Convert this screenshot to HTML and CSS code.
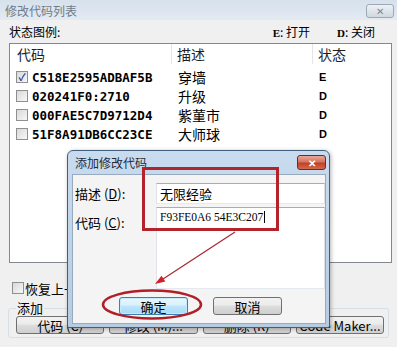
FILE: index.html
```html
<html>
  <head>
    <link rel="stylesheet" href="styles.css">
  </head>
  <body>
    <div class="window">
      <div class="titlebar">
        <span class="title">修改代码列表</span>
        <span class="close-btn">✕</span>
      </div>
      <div class="client">
        <div class="legend">
          <span>状态图例:</span>
          <span class="legend-keys"><span><b class="key">E</b>: 打开</span><span><b class="key">D</b>: 关闭</span></span>
        </div>

        <div class="list">
          <div class="list-head">
            <div class="head-cell first">代码</div>
            <div class="head-cell second">描述</div>
            <div class="head-cell third">状态</div>
          </div>
          <div class="rows">
            <div class="row">
              <div class="cell-code"><span class="check checked">✓</span><span class="code">C518E2595ADBAF5B</span></div>
              <div class="desc">穿墙</div>
              <div class="state">E</div>
            </div>
            <div class="row">
              <div class="cell-code"><span class="check"></span><span class="code">020241F0:2710</span></div>
              <div class="desc">升级</div>
              <div class="state">D</div>
            </div>
            <div class="row">
              <div class="cell-code"><span class="check"></span><span class="code">000FAE5C7D9712D4</span></div>
              <div class="desc">紫菫市</div>
              <div class="state">D</div>
            </div>
            <div class="row">
              <div class="cell-code"><span class="check"></span><span class="code">51F8A91DB6CC23CE</span></div>
              <div class="desc">大师球</div>
              <div class="state">D</div>
            </div>
          </div>
        </div>

        <div class="restore"><span class="check"></span>恢复上一次的设置</div>

        <fieldset class="group">
          <legend>添加</legend>
          <div class="group-buttons">
            <div class="btn">代码 (C)</div>
            <div class="btn">修改 (M)...</div>
            <div class="btn">删除 (R)</div>
            <div class="btn">Code Maker...</div>
          </div>
        </fieldset>
      </div>
    </div>

    <div class="dialog">
      <div class="dialog-title">
        <span>添加修改代码</span>
        <span class="dialog-close">✕</span>
      </div>
      <div class="dialog-body">
        <div class="field-label">描述 (<u>D</u>):</div>
        <div class="input">无限经验</div>
        <div class="field-label top">代码 (<u>C</u>):</div>
        <div class="input textarea"><span class="caret">F93FE0A6 54E3C207</span></div>
        <div class="dialog-buttons">
          <div class="btn btn-default">确定</div>
          <div class="btn">取消</div>
        </div>
      </div>
    </div>

    <svg class="marks" width="397" height="347" viewBox="0 0 397 347">
      <rect x="143.5" y="168.5" width="134" height="61" fill="none" stroke="#b3232c" stroke-width="3"/>
      <ellipse cx="152" cy="304.5" rx="49" ry="14" fill="none" stroke="#b01e28" stroke-width="2.5"/>
      <line x1="235" y1="232" x2="163" y2="279" stroke="#a8282c" stroke-width="1.2"/>
      <polygon points="155,284 165.3,281.5 161.5,275.7" fill="#d0212a"/>
    </svg>
  </body>
</html>
```

FILE: styles.css
```css
body {
  margin: 0;
  width: 397px;
  height: 347px;
  overflow: hidden;
  position: relative;
  background: #f0f0f0;
  color: #000;
  font-family: "Noto Sans CJK SC", sans-serif;
  font-size: 13px;
}

.titlebar {
  height: 20px;
  display: flex;
  align-items: center;
  justify-content: space-between;
  padding: 0 3px 0 5px;
  background: linear-gradient(#d6e1ec, #e3eaf2);
}
.title {
  font-size: 12px;
  color: #6e7b88;
}
.close-btn {
  width: 28px;
  height: 14px;
  box-sizing: border-box;
  margin-top: 2px;
  border: 1px solid #9ba8b6;
  border-radius: 3px;
  background: linear-gradient(#eef2f6, #d0d8e1);
  display: flex;
  align-items: center;
  justify-content: center;
  font-size: 10px;
  line-height: 1;
  color: #7b8794;
}

.client {
  padding: 0 5px 0 9px;
}

.legend {
  height: 23px;
  display: flex;
  align-items: center;
  font-size: 12px;
}
.legend-keys {
  margin-left: auto;
  display: flex;
  gap: 27px;
  padding-right: 17px;
}
.key {
  font-family: "Liberation Serif", serif;
  font-size: 11px;
}

.list {
  height: 220px;
  box-sizing: border-box;
  border: 1px solid #828790;
  background: #fff;
}
.list-head,
.row {
  display: grid;
  grid-template-columns: 162px 141px 1fr;
}
.list-head {
  height: 20px;
}
.head-cell {
  display: flex;
  align-items: center;
  font-size: 14px;
  color: #1e1e1e;
}
.head-cell.first {
  padding-left: 7px;
  border-right: 1px solid #e5e5e5;
}
.head-cell.second {
  padding-left: 5px;
  border-right: 1px solid #e5e5e5;
}
.head-cell.third {
  padding-left: 5px;
}

.rows {
  padding-top: 3px;
}
.row {
  height: 19px;
  align-items: center;
}
.cell-code {
  display: flex;
  align-items: center;
  gap: 4px;
  padding-left: 6px;
}
.check {
  width: 12px;
  height: 12px;
  box-sizing: border-box;
  border: 1px solid #8e8f8f;
  background: linear-gradient(135deg, #d8d8d8, #f7f7f7);
  display: inline-flex;
  align-items: center;
  justify-content: center;
  font-size: 10px;
  font-weight: bold;
  line-height: 1;
  color: #1d3f95;
}
.code {
  font-family: "DejaVu Sans Mono", monospace;
  font-weight: bold;
  font-size: 12.5px;
}
.desc {
  padding-left: 6px;
  font-size: 14px;
}
.state {
  padding-left: 6px;
  font-family: "Liberation Sans", sans-serif;
  font-weight: bold;
  font-size: 11px;
}

.restore {
  display: flex;
  align-items: center;
  gap: 1px;
  height: 16px;
  margin-top: 17px;
  padding-left: 3px;
}

.group {
  margin: 4px 3px 0 -1px;
  padding: 0 4px 3px 7px;
  border: 1px solid #d5dfe5;
  border-radius: 3px;
}
.group legend {
  padding: 0 1px;
  line-height: 16px;
}
.group-buttons {
  display: grid;
  grid-template-columns: repeat(4, 1fr);
  gap: 5px;
}

.btn {
  height: 18px;
  box-sizing: border-box;
  border: 1px solid #707070;
  border-radius: 3px;
  background: linear-gradient(#f2f2f2 0, #ebebeb 45%, #dddddd 50%, #cfcfcf 100%);
  display: flex;
  align-items: center;
  justify-content: center;
  white-space: nowrap;
  overflow: hidden;
}

.dialog {
  position: absolute;
  left: 67px;
  top: 150px;
  width: 263px;
  height: 178px;
  box-sizing: border-box;
  border: 1px solid #3f5f7c;
  border-radius: 6px 6px 2px 2px;
  padding: 0 3px 3px 4px;
  background: linear-gradient(#c9dbee, #b6cce3);
  display: flex;
  flex-direction: column;
  box-shadow: 1px 1px 4px rgba(0, 0, 0, 0.3);
}
.dialog-title {
  height: 23px;
  display: flex;
  align-items: center;
  justify-content: space-between;
  padding-left: 3px;
  font-size: 12px;
  color: #1e2b38;
}
.dialog-close {
  width: 29px;
  height: 15px;
  box-sizing: border-box;
  border: 1px solid #6a2b22;
  border-radius: 3px;
  background: linear-gradient(#e9a898 0%, #d57461 45%, #c2402a 55%, #cf6a4f 100%);
  color: #fff;
  font-weight: bold;
  font-size: 10px;
  line-height: 1;
  display: flex;
  align-items: center;
  justify-content: center;
}
.dialog-body {
  flex: 1;
  background: #f4f4f4;
  border: 1px solid #98abbe;
  padding-top: 8px;
  display: grid;
  grid-template-columns: 83px 1fr;
  grid-template-rows: 21px 82px auto;
  row-gap: 3px;
  align-content: start;
}
.field-label {
  padding-left: 2px;
  align-self: center;
}
.field-label.top {
  align-self: start;
  margin-top: 6px;
}
.input {
  box-sizing: border-box;
  border: 1px solid;
  border-color: #abadb3 #dbdfe6 #e3e9ef #e2e3ea;
  background: #fff;
  padding-left: 3px;
  display: flex;
  align-items: center;
}
.textarea {
  align-items: flex-start;
  padding: 3px 3px;
  font-family: "Liberation Serif", serif;
  font-size: 11.5px;
}
.caret {
  border-right: 1px solid #000;
  padding-right: 1px;
}
.dialog-buttons {
  grid-column: 1 / -1;
  display: flex;
  gap: 25px;
  padding-left: 46px;
  margin-top: 5px;
}
.dialog-buttons .btn {
  width: 69px;
}
.btn-default {
  border-color: #3c7fb1;
  background: linear-gradient(#eaf6fd 0, #d9f0fc 45%, #bee6fd 50%, #a7d9f5 100%);
  box-shadow: inset 0 0 0 1px #c6e9fb;
}

.marks {
  position: absolute;
  left: 0;
  top: 0;
  pointer-events: none;
}
```
